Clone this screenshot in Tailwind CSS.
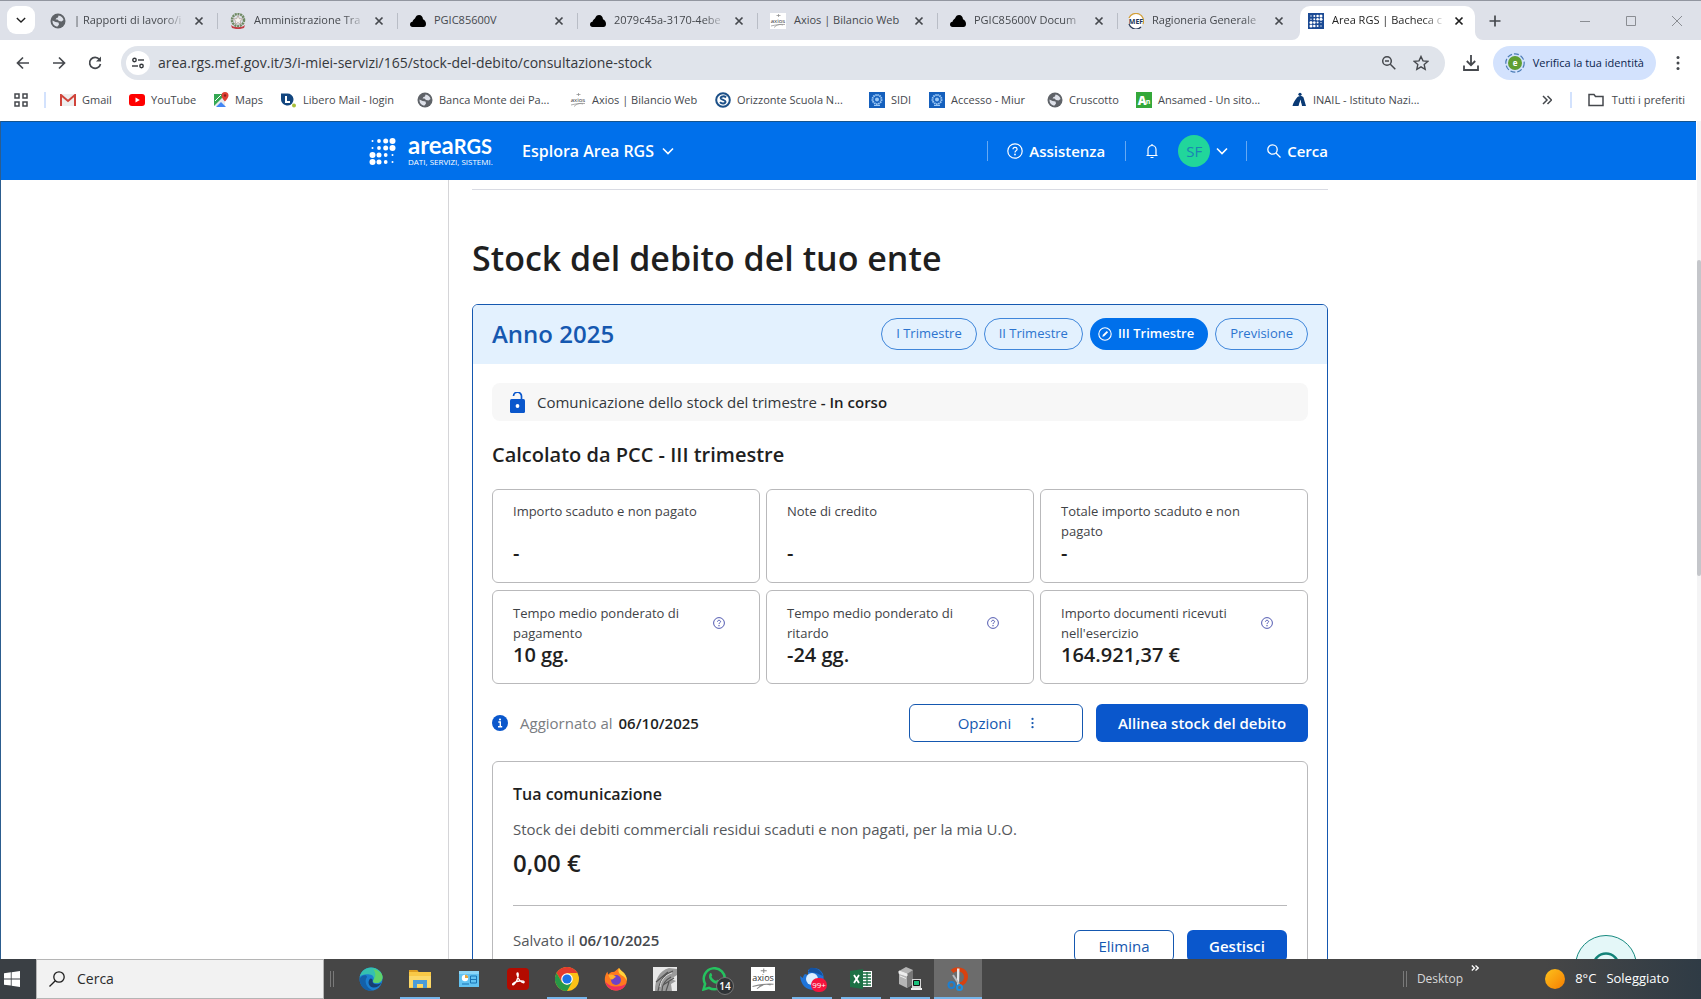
<!DOCTYPE html>
<html lang="it">
<head>
    <meta charset="UTF-8">
    <meta name="viewport" content="width=device-width, initial-scale=1.0">
    <title>Area RGS | Bacheca</title>
    <script src="https://cdn.jsdelivr.net/npm/@tailwindcss/browser@4"></script>
</head>
<body class="h-screen flex flex-col overflow-hidden bg-white font-['Open_Sans','Noto_Sans',sans-serif] text-[#1f1f1f]">

    <!-- Shared icons -->
    <svg class="hidden">
        <symbol id="i-close" viewBox="0 0 10 10"><path d="M1.5 1.5l7 7M8.500 1.500l-7 7" stroke="currentColor" stroke-width="1.700" fill="none"/></symbol>
        <symbol id="i-globe" viewBox="0 0 16 16"><circle cx="8" cy="8" r="7.500" fill="#5f6368"/><path d="M8.500 2.500c2.500.3 4.500 2 5 4.500l-2 1.500-2.500-.5-1.500-1.500H5.500l1-1.500L8 4.500zM2.500 7.500l3 1.500 3 .5.500 2-1.500 2C4.500 13.500 2.300 11 2.500 7.500z" fill="#dee1e9"/></symbol>
        <symbol id="i-cloud" viewBox="0 0 16 12"><path d="M2.500 12C1 12 0 11 0 9.500S1 7 2.500 6.800C3 5 4 4 5 3.500 5.800 1 7.200 0 9 0c2.500 0 3.800 2 4 4.200 2 .8 3 2.800 3 4.800 0 1.800-1 3-2.500 3z" fill="#000"/></symbol>
        <symbol id="i-axios" viewBox="0 0 16 16"><path fill="#fff" d="M0 0h16v16H0z"/><path d="M1 13c4-1 9-2 14-1.500M4 14.500c3-3 6-3.500 9-2.500M8.500 1v3M6.500 2.500l4 0" stroke="#888" stroke-width=".7" fill="none"/><text x="8" y="9.500" font-size="6" text-anchor="middle" fill="#333">axios</text></symbol>
        <symbol id="i-emblem" viewBox="0 0 16 16"><path fill="#1560bd" d="M0 0h16v16H0z"/><circle cx="8" cy="7.500" r="4.500" fill="none" stroke="#9cc8f5" stroke-width="2" stroke-dasharray="1.500 .6"/><circle cx="8" cy="7.500" r="2" fill="#9cc8f5"/><path d="M5 13.500h6" stroke="#9cc8f5"/></symbol>
        <symbol id="i-help" viewBox="0 0 16 16"><circle cx="8" cy="8" r="7.200" fill="none" stroke="currentColor" stroke-width="1.200"/><path d="M6 6.300C6 5 6.900 4.400 8 4.400s2.100.7 2.100 1.800C10.100 7.600 8 7.700 8 9.400" fill="none" stroke="currentColor" stroke-width="1.200"/><circle cx="8" cy="11.500" r=".9" fill="currentColor"/></symbol>
        <symbol id="i-chev" viewBox="0 0 12 8"><path d="M1 1.500l5 5 5-5" fill="none" stroke="currentColor" stroke-width="1.600"/></symbol>
        <symbol id="i-dots" viewBox="0 0 4 16"><circle cx="2" cy="2.500" r="1.500" fill="currentColor"/><circle cx="2" cy="8" r="1.500" fill="currentColor"/><circle cx="2" cy="13.500" r="1.500" fill="currentColor"/></symbol>
    </svg>

    <!-- Tab strip -->
    <div class="h-10 shrink-0 flex bg-[#dee1e9] border-t border-[#9296a0] text-[11px] text-[#45484d]">
        <div class="w-[38px] pl-[7px] pt-[5px]">
            <button aria-label="Cerca schede" class="w-7 h-7 rounded-[9px] bg-white flex items-center justify-center text-[#1f1f1f]"><svg class="w-2.5 h-2"><use href="#i-chev"/></svg></button>
        </div>
        <div class="w-[180px] pl-3 pr-3.5 flex items-center relative">
            <svg class="w-4 h-4 shrink-0 mr-2"><use href="#i-globe"/></svg>
            <button class="flex-1 text-left whitespace-nowrap [mask-image:linear-gradient(90deg,#000_80%,transparent)]">| Rapporti di lavoro/i</button>
            <button aria-label="Chiudi" class="ml-2"><svg class="w-2.5 h-2.5"><use href="#i-close"/></svg></button>
            <span class="absolute right-0 w-px h-4 bg-[#b9bdc6]"></span>
        </div>
        <div class="w-[180px] pl-3 pr-3.5 flex items-center relative">
            <svg class="w-4 h-4 shrink-0 mr-2" viewBox="0 0 16 16"><circle cx="8" cy="7" r="6" fill="none" stroke="#6f8a63" stroke-width="2.500" stroke-dasharray="2 .7"/><path d="M8 2.500l1.300 3.200 3.400.2-2.600 2.200.9 3.300L8 9.500l-3 1.900.9-3.300-2.600-2.200 3.400-.2z" fill="#f5f3ef" stroke="#a08a80" stroke-width=".6"/><path d="M1 12c3 3 11 3 14 0l-1 3c-4 1.500-8 1.500-12 0z" fill="#c33c42"/></svg>
            <button class="flex-1 text-left whitespace-nowrap [mask-image:linear-gradient(90deg,#000_80%,transparent)]">Amministrazione Tra</button>
            <button aria-label="Chiudi" class="ml-2"><svg class="w-2.5 h-2.5"><use href="#i-close"/></svg></button>
            <span class="absolute right-0 w-px h-4 bg-[#b9bdc6]"></span>
        </div>
        <div class="w-[180px] pl-3 pr-3.5 flex items-center relative">
            <svg class="w-4 h-3 shrink-0 mr-2"><use href="#i-cloud"/></svg>
            <button class="flex-1 text-left whitespace-nowrap">PGIC85600V</button>
            <button aria-label="Chiudi" class="ml-2"><svg class="w-2.5 h-2.5"><use href="#i-close"/></svg></button>
            <span class="absolute right-0 w-px h-4 bg-[#b9bdc6]"></span>
        </div>
        <div class="w-[180px] pl-3 pr-3.5 flex items-center relative">
            <svg class="w-4 h-3 shrink-0 mr-2"><use href="#i-cloud"/></svg>
            <button class="flex-1 text-left whitespace-nowrap [mask-image:linear-gradient(90deg,#000_80%,transparent)]">2079c45a-3170-4ebe</button>
            <button aria-label="Chiudi" class="ml-2"><svg class="w-2.5 h-2.5"><use href="#i-close"/></svg></button>
            <span class="absolute right-0 w-px h-4 bg-[#b9bdc6]"></span>
        </div>
        <div class="w-[180px] pl-3 pr-3.5 flex items-center relative">
            <svg class="w-4 h-4 shrink-0 mr-2"><use href="#i-axios"/></svg>
            <button class="flex-1 text-left whitespace-nowrap">Axios | Bilancio Web</button>
            <button aria-label="Chiudi" class="ml-2"><svg class="w-2.5 h-2.5"><use href="#i-close"/></svg></button>
            <span class="absolute right-0 w-px h-4 bg-[#b9bdc6]"></span>
        </div>
        <div class="w-[180px] pl-3 pr-3.5 flex items-center relative">
            <svg class="w-4 h-3 shrink-0 mr-2"><use href="#i-cloud"/></svg>
            <button class="flex-1 text-left whitespace-nowrap [mask-image:linear-gradient(90deg,#000_80%,transparent)]">PGIC85600V Docum</button>
            <button aria-label="Chiudi" class="ml-2"><svg class="w-2.5 h-2.5"><use href="#i-close"/></svg></button>
            <span class="absolute right-0 w-px h-4 bg-[#b9bdc6]"></span>
        </div>
        <div class="w-[182px] pl-2.5 pr-4 flex items-center">
            <svg class="w-4 h-4 shrink-0 mr-2" viewBox="0 0 16 16"><circle cx="8" cy="8" r="7.300" fill="#fff"/><path d="M1 5a7.300 7.300 0 0 1 14 6" fill="none" stroke="#d3a03a" stroke-width="1.300"/><path d="M1 11a7.300 7.300 0 0 0 12 3" fill="none" stroke="#2b3c57" stroke-width="1.300"/><text x="8" y="10.500" font-size="7" font-weight="700" text-anchor="middle" fill="#1c3557">MEF</text></svg>
            <button class="flex-1 text-left whitespace-nowrap [mask-image:linear-gradient(90deg,#000_80%,transparent)]">Ragioneria Generale</button>
            <button aria-label="Chiudi" class="ml-2"><svg class="w-2.5 h-2.5"><use href="#i-close"/></svg></button>
        </div>
        <div class="w-[175px] mt-[5px] pl-2 pr-[11px] pb-[5px] rounded-t-[10px] bg-white flex items-center relative text-[#1f1f1f]">
            <svg class="absolute -left-2 bottom-0 w-2 h-2" viewBox="0 0 8 8"><path d="M8 0v8H0a8 8 0 0 0 8-8z" fill="#fff"/></svg>
            <svg class="absolute -right-2 bottom-0 w-2 h-2" viewBox="0 0 8 8"><path d="M0 0v8h8a8 8 0 0 1-8-8z" fill="#fff"/></svg>
            <svg class="w-4 h-4 shrink-0 mr-2" viewBox="0 0 16 16"><path fill="#1b4a94" d="M0 0h16v16H0z"/><g fill="#fff"><circle cx="3" cy="3" r=".7"/><circle cx="6.300" cy="3" r="1"/><circle cx="9.600" cy="3" r="1.300"/><circle cx="13" cy="3" r="1.500"/><circle cx="3" cy="6.300" r=".7"/><circle cx="6.300" cy="6.300" r="1"/><circle cx="9.600" cy="6.300" r="1.300"/><circle cx="13" cy="6.300" r="1.500"/><circle cx="3" cy="9.600" r="1.500"/><circle cx="6.300" cy="9.600" r="1.300"/><circle cx="9.600" cy="9.600" r="1"/><circle cx="13" cy="9.600" r=".7"/><circle cx="3" cy="13" r="1.500"/><circle cx="6.300" cy="13" r="1.300"/><circle cx="9.600" cy="13" r="1"/><circle cx="13" cy="13" r=".7"/></g></svg>
            <button class="flex-1 text-left whitespace-nowrap [mask-image:linear-gradient(90deg,#000_80%,transparent)]">Area RGS | Bacheca c</button>
            <button aria-label="Chiudi" class="ml-2"><svg class="w-2.5 h-2.5"><use href="#i-close"/></svg></button>
        </div>
        <button aria-label="Nuova scheda" class="w-10 flex items-center justify-center"><svg class="w-3 h-3" viewBox="0 0 12 12"><path d="M6 .5v11M.5 6h11" stroke="#45484d" stroke-width="1.700"/></svg></button>
        <div class="ml-auto pr-px flex text-[#8a8d93]">
            <button aria-label="Riduci" class="w-[46px] flex items-center justify-center"><svg class="w-2.5 h-2.5" viewBox="0 0 10 10"><path d="M0 5.500h10" stroke="currentColor"/></svg></button>
            <button aria-label="Ingrandisci" class="w-[46px] flex items-center justify-center"><svg class="w-2.5 h-2.5" viewBox="0 0 10 10"><path d="M.5.5h9v9h-9z" fill="none" stroke="currentColor"/></svg></button>
            <button aria-label="Chiudi finestra" class="w-[46px] flex items-center justify-center"><svg class="w-2.5 h-2.5" viewBox="0 0 10 10"><path d="M0 0l10 10M10 0L0 10" stroke="currentColor"/></svg></button>
        </div>
    </div>

    <!-- Address bar -->
    <div class="h-[46px] shrink-0 flex items-center px-3.5 text-[#45484d]">
        <div class="w-[107px] flex items-center gap-[18px]">
            <button aria-label="Indietro" class="w-[18px]"><svg class="w-[18px] h-4" viewBox="0 0 18 16"><path d="M15 8H4M9 2.500L3.500 8 9 13.500" fill="none" stroke="currentColor" stroke-width="1.700"/></svg></button>
            <button aria-label="Avanti" class="w-[18px]"><svg class="w-[18px] h-4" viewBox="0 0 18 16"><path d="M3 8h11M9 2.500L14.500 8 9 13.500" fill="none" stroke="currentColor" stroke-width="1.700"/></svg></button>
            <button aria-label="Ricarica" class="w-[18px]"><svg class="w-[18px] h-4" viewBox="0 0 18 16"><path d="M13.500 4.500A5.500 5.500 0 1 0 14.500 9" fill="none" stroke="currentColor" stroke-width="1.700"/><path d="M15 1.500v5h-5z" fill="currentColor"/></svg></button>
        </div>
        <div class="flex-1 h-[34px] rounded-full bg-[#e0e4eb] flex items-center pl-[5px] pr-4">
            <button aria-label="Informazioni sito" class="w-6 h-6 rounded-full bg-white flex items-center justify-center"><svg class="w-3 h-3" viewBox="0 0 12 12"><g fill="none" stroke="#33363a" stroke-width="1.400"><circle cx="2.500" cy="3" r="1.700"/><path d="M6 3h6"/><circle cx="9.500" cy="9" r="1.700"/><path d="M0 9h6"/></g></svg></button>
            <input aria-label="Indirizzo" type="text" value="area.rgs.mef.gov.it/3/i-miei-servizi/165/stock-del-debito/consultazione-stock" class="flex-1 ml-2 bg-transparent outline-none text-sm text-[#35383c]">
            <button aria-label="Zoom" class="mr-4"><svg class="w-4 h-4" viewBox="0 0 16 16"><circle cx="6" cy="6" r="4.300" fill="none" stroke="currentColor" stroke-width="1.500"/><path d="M9.300 9.300l5 5M4 6h4" stroke="currentColor" stroke-width="1.500"/></svg></button>
            <button aria-label="Preferiti"><svg class="w-4 h-4" viewBox="0 0 16 16"><path d="M8 1.500l2 4.400 4.800.5-3.600 3.200 1 4.700L8 11.900l-4.200 2.400 1-4.700L1.200 6.400 6 5.900z" fill="none" stroke="currentColor" stroke-width="1.400"/></svg></button>
        </div>
        <button aria-label="Download" class="ml-[18px] mr-3.5"><svg class="w-4 h-4" viewBox="0 0 16 16"><path d="M8 0v10M3.800 6L8 10.200 12.200 6M1 10.500V15h14v-4.500" fill="none" stroke="currentColor" stroke-width="1.800"/></svg></button>
        <button class="h-[34px] px-3 rounded-full bg-[#d3e2fd] flex items-center gap-2 text-[11px] text-[#0b1f4d]">
            <svg class="w-5 h-5" viewBox="0 0 20 20"><circle cx="10" cy="10" r="9.200" fill="none" stroke="#4a7bb5" stroke-width="1.200" stroke-dasharray="5 2"/><circle cx="10" cy="10" r="7" fill="#5f9e32"/><text x="10" y="13" font-size="8" font-weight="700" text-anchor="middle" fill="#fff">e</text></svg>
            Verifica la tua identità
        </button>
        <button aria-label="Menu" class="ml-5 mr-[7px]"><svg class="w-1 h-4"><use href="#i-dots"/></svg></button>
    </div>

    <!-- Bookmarks -->
    <div class="h-[35px] pb-[7px] shrink-0 flex items-center pl-3.5 pr-4 text-[11px] text-[#45484d] whitespace-nowrap">
        <button aria-label="Gruppi di schede" class="w-[30px]"><svg class="w-3.5 h-3.5" viewBox="0 0 14 14"><g fill="none" stroke="currentColor" stroke-width="1.500"><path d="M1 1h4v4H1zM9 1h4v4H9zM1 9h4v4H1zM9 9h4v4H9z"/></g></svg></button>
        <span class="w-0.5 h-4 bg-[#d3e2fd] mr-3.5"></span>
        <nav class="grid grid-cols-[69px_84px_68px_136px_153px_145px_154px_60px_118px_89px_155px_150px]">
            <a href="#" class="flex items-center gap-1.5"><svg class="w-4 h-3" viewBox="0 0 16 12"><path d="M0 0h16v12H0z" fill="#eee"/><path d="M1 12V1l7 6 7-6v11" fill="none" stroke="#d0443a" stroke-width="2"/></svg>Gmail</a>
            <a href="#" class="flex items-center gap-1.5"><svg class="w-4 h-3" viewBox="0 0 16 12"><rect width="16" height="12" rx="3" fill="#f00"/><path d="M6.500 3.500v5L10.800 6z" fill="#fff"/></svg>YouTube</a>
            <a href="#" class="flex items-center gap-1.5"><svg class="w-4 h-4" viewBox="0 0 16 16"><path fill="#34a853" d="M1 2h11v12H1z"/><path d="M1 14L12 3v11z" fill="#e8eaed"/><path d="M3 15l5-5 5 5z" fill="#4285f4"/><path d="M2 9l6-6" stroke="#fff"/><path d="M12 0a3.500 3.500 0 0 1 3.500 3.500C15.500 6 12 9.500 12 9.500S8.500 6 8.500 3.500A3.500 3.500 0 0 1 12 0z" fill="#e04034"/><circle cx="12" cy="3.500" r="1.200" fill="#8c1f18"/></svg>Maps</a>
            <a href="#" class="flex items-center gap-1.5"><svg class="w-4 h-4" viewBox="0 0 16 16"><path d="M0 1.500h6a6 6 0 0 1 1 12C3 13.500 0 11 0 7z" fill="#12467f"/><path d="M5 4v6h4" fill="none" stroke="#fff" stroke-width="2"/><circle cx="13" cy="13.500" r="2" fill="#a8bf3a"/></svg>Libero Mail - login</a>
            <a href="#" class="flex items-center gap-1.5"><svg class="w-4 h-4"><use href="#i-globe"/></svg>Banca Monte dei Pa...</a>
            <a href="#" class="flex items-center gap-1.5"><svg class="w-4 h-4"><use href="#i-axios"/></svg>Axios | Bilancio Web</a>
            <a href="#" class="flex items-center gap-1.5"><svg class="w-4 h-4" viewBox="0 0 16 16"><circle cx="8" cy="8" r="6.800" fill="#fff" stroke="#1c5088" stroke-width="2"/><path d="M11 5.500C9.500 3.800 5.500 4 5.700 6.200 6 8.300 10.500 7.500 10.500 9.800c0 2-4 2.200-5.500.4" fill="none" stroke="#1c5088" stroke-width="2"/></svg>Orizzonte Scuola N...</a>
            <a href="#" class="flex items-center gap-1.5"><svg class="w-4 h-4"><use href="#i-emblem"/></svg>SIDI</a>
            <a href="#" class="flex items-center gap-1.5"><svg class="w-4 h-4"><use href="#i-emblem"/></svg>Accesso - Miur</a>
            <a href="#" class="flex items-center gap-1.5"><svg class="w-4 h-4"><use href="#i-globe"/></svg>Cruscotto</a>
            <a href="#" class="flex items-center gap-1.5"><svg class="w-4 h-4" viewBox="0 0 16 16"><path fill="#34a83a" d="M0 0h16v16H0z"/><text x="6" y="13" font-size="12" font-weight="800" text-anchor="middle" fill="#fff">A</text><text x="12" y="12" font-size="7" font-weight="700" text-anchor="middle" fill="#fff">n</text></svg>Ansamed - Un sito...</a>
            <a href="#" class="flex items-center gap-1.5"><svg class="w-4 h-4" viewBox="0 0 16 16"><path d="M6.500 5c2-1.500 5-1.500 6 .5L15 14h-4L9.500 8 8 14H1.500C2 11 4 8 6.500 5z" fill="#0a3a75"/><path d="M9.500 7.500l1 6.500h-3z" fill="#fff"/><circle cx="9" cy="2.300" r="1.600" fill="#0a3a75"/></svg>INAIL - Istituto Nazi...</a>
        </nav>
        <button aria-label="Altri preferiti" class="ml-auto mr-4.5"><svg class="w-2.5 h-2.5" viewBox="0 0 10 10"><path d="M1 1l4 4-4 4M5.500 1l4 4-4 4" fill="none" stroke="currentColor" stroke-width="1.500"/></svg></button>
        <span class="w-0.5 h-4 bg-[#d3e2fd] mr-4"></span>
        <a href="#" class="flex items-center gap-2"><svg class="w-4 h-3.5" viewBox="0 0 16 14"><path d="M1 1.500h5l1.500 2H15v9H1z" fill="none" stroke="currentColor" stroke-width="1.500"/></svg>Tutti i preferiti</a>
    </div>

    <!-- Web page -->
    <div class="flex-1 min-h-0 relative overflow-hidden border-l border-[#2c5d8f] pr-[5px]">
        <header class="h-[59px] bg-[#0070eb] border-t border-[#14548f] text-white">
            <div class="max-w-[959px] h-full mx-auto flex items-center text-[15px] font-semibold">
                <a href="#" class="flex items-center w-[153px]">
                    <svg class="w-[27px] h-[27px] mr-3" viewBox="0 0 27 27"><g fill="#fff"><circle cx="3.500" cy="3" r="1"/><circle cx="10" cy="3" r="1.900"/><circle cx="16.700" cy="3" r="2.500"/><circle cx="23.500" cy="3" r="3"/><circle cx="3.500" cy="10" r="1"/><circle cx="10" cy="10" r="1.900"/><circle cx="16.700" cy="10" r="2.500"/><circle cx="23.500" cy="10" r="3"/><circle cx="3.500" cy="17" r="3"/><circle cx="10" cy="17" r="2.500"/><circle cx="16.700" cy="17" r="1.900"/><circle cx="23.500" cy="17" r="1"/><circle cx="3.500" cy="24" r="3"/><circle cx="10" cy="24" r="2.500"/><circle cx="16.700" cy="24" r="1.900"/><circle cx="23.500" cy="24" r="1"/></g></svg>
                    <span class="flex flex-col pb-1">
                        <span class="text-2xl leading-6 font-[Lato] font-bold">area<span class="text-xl leading-6">RGS</span></span>
                        <span class="text-[8px] leading-2 font-normal whitespace-nowrap">DATI, SERVIZI, SISTEMI.</span>
                    </span>
                </a>
                <button class="flex items-center gap-2 text-base leading-5">Esplora Area RGS <svg class="w-3 h-2"><use href="#i-chev"/></svg></button>
                <div class="ml-auto flex items-center">
                    <span class="w-px h-5 bg-white/40 mr-[19px]"></span>
                    <button class="flex items-center gap-1.5"><svg class="w-4 h-4"><use href="#i-help"/></svg>Assistenza</button>
                    <span class="w-px h-5 bg-white/40 mx-5"></span>
                    <button aria-label="Notifiche"><svg class="w-3 h-4" viewBox="0 0 12 16"><path d="M2 12V6.500a4 4 0 0 1 8 0V12M.5 12.500h11M6 1v1.500M4.500 14.500h3" fill="none" stroke="#fff" stroke-width="1.200"/></svg></button>
                    <button class="ml-5 w-8 h-8 rounded-full bg-[#21d69b] text-[#1b83b4] font-normal">SF</button>
                    <button aria-label="Profilo" class="ml-1.5"><svg class="w-3 h-2"><use href="#i-chev"/></svg></button>
                    <span class="w-px h-5 bg-white/40 ml-4.5 mr-5"></span>
                    <button class="flex items-center gap-1.5"><svg class="w-3.5 h-3.5" viewBox="0 0 14 14"><circle cx="5.500" cy="5.500" r="4.700" fill="none" stroke="#fff" stroke-width="1.300"/><path d="M9 9l4.500 4.500" stroke="#fff" stroke-width="1.300"/></svg>Cerca</button>
                </div>
            </div>
        </header>

        <div class="max-w-[959px] mx-auto pl-[79px]">
            <main class="border-l border-[#d5d5d8] pl-[23px] pt-[9px]">
                <hr class="border-[#d9dbe3]">
                <h1 class="mt-11 mb-[22px] text-[34px] leading-[48px] font-semibold">Stock del debito del tuo ente</h1>

                <section class="border border-[#1558b0] rounded-md overflow-hidden">
                    <div class="h-[59px] px-[19px] pb-0.5 bg-[#e3f1fe] flex items-center gap-[7px] text-[13px] text-[#2c74cf]">
                        <h2 class="mr-auto text-2xl font-semibold text-[#1558b0]">Anno 2025</h2>
                        <button class="h-8 px-3.5 rounded-full border border-[#3f86da]">I Trimestre</button>
                        <button class="h-8 px-3.5 rounded-full border border-[#3f86da]">II Trimestre</button>
                        <button class="h-8 pl-2 pr-3.5 rounded-full bg-[#0070eb] text-white font-semibold flex items-center gap-1.5"><svg class="w-3.5 h-3.5" viewBox="0 0 14 14"><circle cx="7" cy="7" r="6.200" fill="none" stroke="#fff" stroke-width="1.100"/><path d="M4.300 9.800l.6-2L8.800 4l1.300 1.300-3.900 3.900z" fill="#fff"/></svg>III Trimestre</button>
                        <button class="h-8 px-3.5 rounded-full border border-[#3f86da]">Previsione</button>
                    </div>

                    <div class="px-[19px] pt-[19px]">
                        <div class="h-[38px] pl-[18px] rounded-lg bg-[#f7f7f7] flex items-center gap-3 text-[15px] text-[#33373b]">
                            <svg class="w-[15px] h-[21px]" viewBox="0 0 15 21"><rect y="7" width="15" height="14" rx="1.500" fill="#0a57cc"/><path d="M3.500 4A4 4 0 0 1 11.500 4.500V8" fill="none" stroke="#0a57cc" stroke-width="1.700"/><circle cx="7.500" cy="14" r="1.900" fill="#fff"/></svg>
                            <p>Comunicazione dello stock del trimestre <b class="font-semibold text-[#1f1f1f]">- In corso</b></p>
                        </div>
                        <h3 class="my-5 text-xl leading-7 font-semibold">Calcolato da PCC - III trimestre</h3>

                        <div class="grid grid-cols-3 gap-x-1.5 gap-y-[7px]">
                            <div class="border border-[#b9b9bb] rounded-md px-5 pt-[11px] pb-[17px]">
                                <p class="h-10 text-[13px] leading-5 text-[#3f4347]">Importo scaduto e non pagato</p>
                                <p class="text-xl leading-6 font-semibold">-</p>
                            </div>
                            <div class="border border-[#b9b9bb] rounded-md px-5 pt-[11px] pb-[17px]">
                                <p class="h-10 text-[13px] leading-5 text-[#3f4347]">Note di credito</p>
                                <p class="text-xl leading-6 font-semibold">-</p>
                            </div>
                            <div class="border border-[#b9b9bb] rounded-md px-5 pt-[11px] pb-[17px]">
                                <p class="h-10 text-[13px] leading-5 text-[#3f4347]">Totale importo scaduto e non<br>pagato</p>
                                <p class="text-xl leading-6 font-semibold">-</p>
                            </div>
                            <div class="border border-[#b9b9bb] rounded-md px-5 pt-3 pb-4">
                                <div class="flex items-center justify-between pr-3.5">
                                    <p class="h-10 text-[13px] leading-5 text-[#3f4347]">Tempo medio ponderato di<br>pagamento</p>
                                    <button aria-label="Aiuto" class="text-[#4048a8]"><svg class="w-3 h-3"><use href="#i-help"/></svg></button>
                                </div>
                                <p class="text-xl leading-6 font-semibold">10 gg.</p>
                            </div>
                            <div class="border border-[#b9b9bb] rounded-md px-5 pt-3 pb-4">
                                <div class="flex items-center justify-between pr-3.5">
                                    <p class="h-10 text-[13px] leading-5 text-[#3f4347]">Tempo medio ponderato di<br>ritardo</p>
                                    <button aria-label="Aiuto" class="text-[#4048a8]"><svg class="w-3 h-3"><use href="#i-help"/></svg></button>
                                </div>
                                <p class="text-xl leading-6 font-semibold">-24 gg.</p>
                            </div>
                            <div class="border border-[#b9b9bb] rounded-md px-5 pt-3 pb-4">
                                <div class="flex items-center justify-between pr-3.5">
                                    <p class="h-10 text-[13px] leading-5 text-[#3f4347]">Importo documenti ricevuti<br>nell'esercizio</p>
                                    <button aria-label="Aiuto" class="text-[#4048a8]"><svg class="w-3 h-3"><use href="#i-help"/></svg></button>
                                </div>
                                <p class="text-xl leading-6 font-semibold">164.921,37 €</p>
                            </div>
                        </div>

                        <div class="mt-5 mb-[19px] flex items-center text-[15px]">
                            <svg class="w-4 h-4 mr-3" viewBox="0 0 16 16"><circle cx="8" cy="8" r="8" fill="#0a57cc"/><circle cx="8" cy="4.500" r="1.100" fill="#fff"/><path d="M6.300 7h2v4.500M6 11.700h4.200" fill="none" stroke="#fff" stroke-width="1.400"/></svg>
                            <p class="mr-auto text-[#7a7d82]">Aggiornato al <b class="ml-0.5 font-semibold text-[#1f1f1f]">06/10/2025</b></p>
                            <button class="w-[174px] h-[38px] mr-[13px] rounded-md border border-[#1558b0] text-[#1558b0] flex items-center justify-center gap-5">Opzioni <svg class="w-[3px] h-3"><use href="#i-dots"/></svg></button>
                            <button class="w-[212px] h-[38px] rounded-md bg-[#0a57cc] text-white font-semibold">Allinea stock del debito</button>
                        </div>

                        <div class="border border-[#b9b9bb] rounded-md px-5 pt-5 pb-5">
                            <h3 class="text-base font-semibold">Tua comunicazione</h3>
                            <p class="mt-[11px] text-[15px] leading-6 text-[#55585c]">Stock dei debiti commerciali residui scaduti e non pagati, per la mia U.O.</p>
                            <p class="mt-1.5 text-2xl leading-8 font-semibold">0,00 €</p>
                            <div class="mt-[26px] pt-6 border-t border-[#b9b9bb] flex items-start text-[15px]">
                                <p class="mr-auto leading-5 text-[#55585c]">Salvato il <b class="font-semibold text-[#45484d]">06/10/2025</b></p>
                                <button class="w-[100px] h-8 mr-[13px] rounded-md border border-[#1558b0] text-[#1558b0]">Elimina</button>
                                <button class="w-[100px] h-8 rounded-md bg-[#0a57cc] text-white font-semibold">Gestisci</button>
                            </div>
                        </div>
                    </div>
                </section>
            </main>
        </div>

        <!-- Floating assistant button and scrollbar -->
        <button aria-label="Assistente" class="absolute right-16 -bottom-[38px] w-[62px] h-[62px] rounded-full border border-[#178a80] bg-[#e4f7f8] flex justify-center pt-4"><svg class="w-7 h-7" viewBox="0 0 28 28"><circle cx="14" cy="14" r="12.500" fill="none" stroke="#138379" stroke-width="2.500"/><circle cx="14" cy="14" r="7" fill="#138379"/></svg></button>
        <span class="absolute right-0 top-0 w-1 h-full bg-[#f4f4f5]"></span>
        <span class="absolute right-0 top-[139px] w-1 h-[316px] rounded-full bg-[#c4c6ca]"></span>
    </div>

    <!-- Taskbar -->
    <footer class="h-10 shrink-0 flex bg-[#464646] text-white">
        <button aria-label="Start" class="w-9 pl-1 flex items-center bg-[#3a3f44]"><svg class="w-4 h-4" viewBox="0 0 16 16"><path d="M0 2.300L6.800 1.300v6.200H0zM7.600 1.200L16 0v7.500H7.600zM0 8.400h6.800v6.200L0 13.700zM7.600 8.400H16V16l-8.400-1.200z" fill="#fff"/></svg></button>
        <label class="w-[288px] pl-3 flex items-center gap-3 bg-[#f2f2f2] border border-[#b5b5b5] text-[#2b2b2b]">
            <svg class="w-4 h-4" viewBox="0 0 16 16"><circle cx="10" cy="6" r="5.200" fill="none" stroke="#1f1f1f" stroke-width="1.300"/><path d="M6.300 9.700L.5 15.500" stroke="#1f1f1f" stroke-width="1.300"/></svg>
            <input aria-label="Cerca" type="text" placeholder="Cerca" class="w-48 bg-transparent outline-none text-sm placeholder:text-[#2b2b2b]">
        </label>
        <span class="w-1 h-4 mt-3 ml-1.5 mr-3 border-x border-[#7a7a7a]"></span>
        <div class="flex">
            <button aria-label="Edge" class="w-[49px] flex items-center justify-center"><svg class="w-6 h-6" viewBox="0 0 24 24"><circle cx="12" cy="12" r="11.500" fill="#1b7fd0"/><path d="M.7 10C2 4 6.500.5 12 .5c6.500 0 11.500 4.500 11.500 9.500 0 4-3 6-6 6-3.500 0-4-1.500-3-3 .8-1.500.5-5-4-5.500C6 7 2 8 .7 10z" fill="#35c1b0"/><path d="M14 2c5 1 9.500 4 9.500 8 0 4-3 6-6 6-3.500 0-4-1.500-3-3 2-3 3-7-.5-11z" fill="#5fd36a"/><path d="M8 10c-3 4-1 11 6 13.300C6 25 .5 19 .6 12 2 8 8 7 8 10z" fill="#1460a8"/><path d="M13.500 14c-.5 3 4 4.500 9 2-2 3-5 5-8.500 4.500C9.500 20 8 14 11.500 11.500c2 0 2.500 1.500 2 2.500z" fill="#173f73"/></svg></button>
            <button aria-label="Esplora file" class="w-[49px] flex items-center justify-center relative"><svg class="w-[22px] h-5" viewBox="0 0 22 20"><path d="M0 1h8l1.500 2H22v16H0z" fill="#f8c846"/><path d="M0 1h8l1.500 2H0z" fill="#dd9d20"/><path d="M0 7h22v11H0z" fill="#fbd869"/><path d="M4 19v-8h14v8h-4v-4H8v4z" fill="#4a9cd8"/></svg><span class="absolute bottom-0 w-10 h-0.5 bg-[#76b5ea]"></span></button>
            <button aria-label="Posta" class="w-[49px] flex items-center justify-center"><svg class="w-5 h-4" viewBox="0 0 20 16"><rect width="20" height="16" fill="#62c3f2"/><path d="M0 0h20v3H0z" fill="#8dd6f7"/><circle cx="6" cy="7" r="3.200" fill="#fff"/><path d="M6 7V3.800A3.200 3.200 0 0 1 9.200 7z" fill="#e9a63a"/><path d="M11.500 5h6v7h-6zM11.500 8.500h6" fill="none" stroke="#1975b5"/><path d="M3 13h7" stroke="#1975b5"/></svg></button>
            <button aria-label="Acrobat" class="w-[49px] flex items-center justify-center"><svg class="w-[22px] h-[22px]" viewBox="0 0 22 22"><rect width="22" height="22" rx="4" fill="#b30b00"/><path d="M10.500 5c1.500 0 .5 5-1 8s-3.500 4.500-4 3.500 3-3 7-3.500 5 .5 4.500 1.500-4-1-5.500-4S9.500 5 10.500 5z" fill="none" stroke="#fff" stroke-width="1.300"/></svg></button>
            <button aria-label="Chrome" class="w-[49px] flex items-center justify-center relative"><svg class="w-6 h-6" viewBox="0 0 24 24"><circle cx="12" cy="12" r="12" fill="#fbc116"/><path d="M12 6h10.400a12 12 0 0 0-20.800 0L6.800 15z" fill="#e33b2e"/><path d="M1.600 6A12 12 0 0 0 12 24l5.200-9L12 18l-5.200-3z" fill="#279847"/><circle cx="12" cy="12" r="5.800" fill="#fff"/><circle cx="12" cy="12" r="4.600" fill="#1a73e8"/></svg><span class="absolute bottom-0 w-10 h-0.5 bg-[#76b5ea]"></span></button>
            <button aria-label="Firefox" class="w-[49px] flex items-center justify-center"><svg class="w-6 h-6" viewBox="0 0 24 24"><path d="M15 1c1 2 3 3 5 5 2.500 3 3.500 6 2.500 10-1.500 4.500-5.500 7.500-10.500 7.500C5.500 23.500.8 18.500.8 12.500c0-3 1-6 2.700-8 0 1.500.5 2.500 1 3C6 5.500 7.500 5 9 5c2 0 3-2 6-4z" fill="#ff7a1f"/><path d="M15 1c1 2 3 3 5 5 2 2.500 3 5 2.800 8-1-3-3-4.500-5-5.500C15 7 13.500 4 15 1z" fill="#ffd43b"/><path d="M1 14c1 5 5.500 9.500 11 9.500 4.500 0 8.500-2.500 10.200-7C18 20 6 22 1 14z" fill="#f0305f"/><circle cx="12" cy="13" r="5" fill="#6f42c8"/><path d="M4.500 8c3-1.500 6 0 7.500 2-2 .5-2 2-4 2.500-1.500 0-3-2-3.500-4.500z" fill="#ffb02e"/></svg></button>
            <button aria-label="Programma" class="w-[49px] flex items-center justify-center"><svg class="w-6 h-6" viewBox="0 0 24 24"><path fill="#e9e9e9" d="M0 0h24v24H0z"/><path d="M2 24C2 12 6 4 16 1l8 1v6l-6 4 5 2-5 3 1 7z" fill="#9b9b9b"/><path d="M5 24C7 14 10 8 20 4M9 24c0-7 3-11 9-14M3 15l12-10M10 18l11-7M13 24l3-9" fill="none" stroke="#555" stroke-width="1.200"/><path d="M7 20c1-7 5-12 12-14" fill="none" stroke="#ddd"/></svg></button>
            <button aria-label="WhatsApp" class="w-[49px] flex items-center justify-center relative"><svg class="w-6 h-6" viewBox="0 0 24 24"><path d="M1.500 22.500l1.600-5.700A10.500 10.500 0 1 1 7 20.800z" fill="none" stroke="#25c25f" stroke-width="2.500"/><path d="M7.500 7c1-1.500 2-1 2.500.8.500 1-.5 1.500-.5 2 1 2 2.500 3.500 4.500 4 .8 0 1-1.500 2-1l2 1c.5 2-2 3.500-4 3-4-1-7.500-5-7-8z" fill="#25c25f"/></svg><span class="absolute left-[27px] top-[18px] w-[18px] h-[18px] rounded-full bg-[#2f3336] border border-[#777] text-[10px] leading-4 font-semibold">14</span></button>
            <button aria-label="Axios" class="w-[49px] flex items-center justify-center"><svg class="w-6 h-6"><use href="#i-axios"/></svg></button>
            <button aria-label="Thunderbird" class="w-[49px] flex items-center justify-center relative"><svg class="w-6 h-6" viewBox="0 0 24 24"><path d="M8 3c6-4 12-2 15 4 2 7-1 14-9 16C6 23 1 18 0 9l3 2c0-2 1-3 2-4l3 1z" fill="#1f74d8"/><path d="M10 1c6-1 11 2 13 8l-7-3-8-1z" fill="#1452a0"/><circle cx="12" cy="12" r="6" fill="#dbeeff"/></svg><span class="absolute left-[24px] top-[19px] w-4 h-3.5 rounded-full bg-[#f5143d] text-[8px] leading-3.5">99+</span><span class="absolute bottom-0 w-10 h-0.5 bg-[#76b5ea]"></span></button>
            <button aria-label="Excel" class="w-[49px] flex items-center justify-center relative"><svg class="w-[22px] h-5" viewBox="0 0 22 20"><path fill="#fff" d="M12 2h10v16H12z"/><path d="M13 4h8M13 7h8M13 10h8M13 13h8M13 16h8M17 3v14" stroke="#1d7145" stroke-width="1.300"/><path d="M0 2l13-2v20L0 18z" fill="#1d7145"/><path d="M4 6l5 8M9 6l-5 8" stroke="#fff" stroke-width="1.800"/></svg><span class="absolute bottom-0 w-10 h-0.5 bg-[#76b5ea]"></span></button>
            <button aria-label="Server" class="w-[49px] flex items-center justify-center relative"><svg class="w-6 h-6" viewBox="0 0 24 24"><path d="M1 4l7-4 7 3v14l-6 4-8-4z" fill="#b5b5b5"/><path d="M9 7l6-4v14l-6 4z" fill="#777"/><path d="M1 4l8 3v2L1 6.500zM2 9l6 2.500" fill="#eee" stroke="#eee"/><path d="M14 12h9v9h-9z" fill="#d6d6d6"/><path d="M15.500 13.500h6v5h-6z" fill="#19c07a" stroke="#111"/><path d="M13 22h11" stroke="#eee" stroke-width="2"/></svg><span class="absolute bottom-0 w-10 h-0.5 bg-[#76b5ea]"></span></button>
            <button aria-label="Strumento di cattura" class="w-12 flex items-center justify-center relative bg-[#6c6c6c]"><svg class="w-6 h-6" viewBox="0 0 24 24"><path d="M6 4.500C10 .5 20 2 20 10c0 4-3 7-7 7.500" fill="none" stroke="#d8410f" stroke-width="4"/><path d="M11 1.500h2.500L13 18h-2z" fill="#e4e7ea"/><path d="M7 8l6 9" stroke="#b5bac0" stroke-width="2"/><circle cx="5.500" cy="18" r="3" fill="none" stroke="#1d7fd0" stroke-width="2"/><circle cx="13.500" cy="20.500" r="2.500" fill="none" stroke="#1d8fe0" stroke-width="2"/></svg><span class="absolute bottom-0 w-12 h-0.5 bg-[#76b5ea]"></span></button>
        </div>
        <div class="ml-auto flex items-center text-xs text-[#d8d8d8]">
            <span class="w-1 h-4 mr-2.5 border-x border-[#7a7a7a]"></span>
            <span>Desktop</span>
            <button aria-label="Mostra altro" class="self-start mt-1.5 ml-2"><svg class="w-2 h-1.5" viewBox="0 0 8 6"><path d="M.8.5L3.500 3 .8 5.500M4.500.5L7.200 3 4.500 5.500" fill="none" stroke="#fff" stroke-width="1.300"/></svg></button>
        </div>
        <button class="ml-[66px] pr-8 flex items-center gap-2.5 text-[13px] bg-linear-to-r from-[#464646] to-[#2f3b45]">
            <span class="w-5 h-5 rounded-full bg-linear-to-br from-[#fcc21b] to-[#f57c00]"></span>
            <span>8°C</span><span>Soleggiato</span>
        </button>
    </footer>
</body>
</html>
